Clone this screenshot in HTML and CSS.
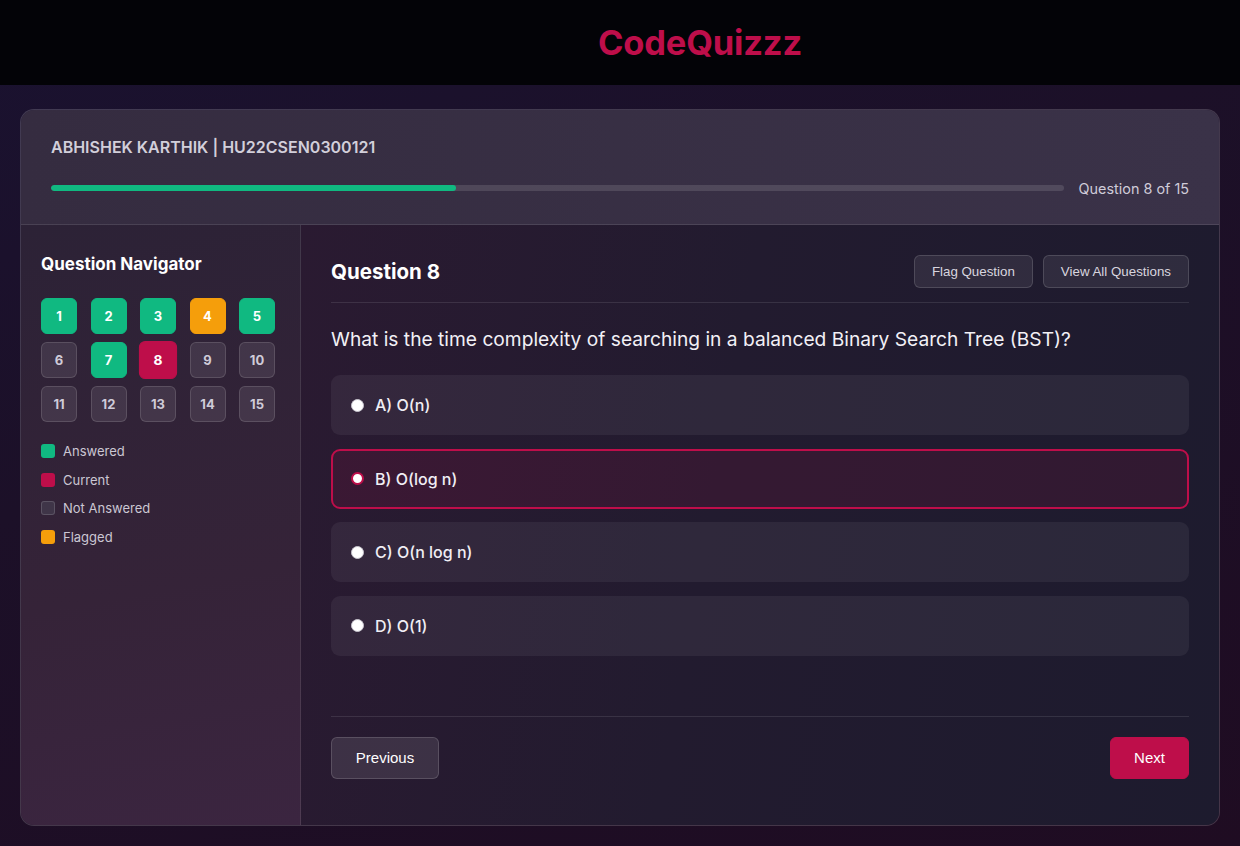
FILE: index.html
```html
<!DOCTYPE html>
<html lang="en">
<head>
<meta charset="utf-8">
<title>CodeQuizzz</title>
<link rel="stylesheet" href="styles.css">
</head>
<body>
<header class="site-header">
  <h1 class="logo">CodeQuizzz</h1>
</header>
<main class="page">
  <section class="card">
    <div class="card-top">
      <div class="student">ABHISHEK KARTHIK | HU22CSEN0300121</div>
      <div class="progress-row">
        <div class="progress"><div class="progress-fill" style="width:40%"></div></div>
        <div class="progress-label">Question 8 of 15</div>
      </div>
    </div>
    <div class="card-body">
      <aside class="sidebar">
        <h2 class="side-title">Question Navigator</h2>
        <div class="nav-grid">
          <button class="qbtn answered">1</button>
          <button class="qbtn answered">2</button>
          <button class="qbtn answered">3</button>
          <button class="qbtn flagged">4</button>
          <button class="qbtn answered">5</button>
          <button class="qbtn">6</button>
          <button class="qbtn answered">7</button>
          <button class="qbtn current">8</button>
          <button class="qbtn">9</button>
          <button class="qbtn">10</button>
          <button class="qbtn">11</button>
          <button class="qbtn">12</button>
          <button class="qbtn">13</button>
          <button class="qbtn">14</button>
          <button class="qbtn">15</button>
        </div>
        <ul class="legend">
          <li><span class="sw sw-answered"></span>Answered</li>
          <li><span class="sw sw-current"></span>Current</li>
          <li><span class="sw sw-none"></span>Not Answered</li>
          <li><span class="sw sw-flagged"></span>Flagged</li>
        </ul>
      </aside>
      <div class="main">
        <div class="q-head">
          <h2 class="q-title">Question 8</h2>
          <div class="q-actions">
            <button class="ghost-btn">Flag Question</button>
            <button class="ghost-btn">View All Questions</button>
          </div>
        </div>
        <p class="q-text">What is the time complexity of searching in a balanced Binary Search Tree (BST)?</p>
        <div class="options">
          <label class="option"><span class="radio"></span>A) O(n)</label>
          <label class="option selected"><span class="radio"></span>B) O(log n)</label>
          <label class="option"><span class="radio"></span>C) O(n log n)</label>
          <label class="option"><span class="radio"></span>D) O(1)</label>
        </div>
        <div class="q-foot">
          <button class="nav-btn prev">Previous</button>
          <button class="nav-btn next">Next</button>
        </div>
      </div>
    </div>
  </section>
</main>
</body>
</html>
```

FILE: styles.css
```css
* { box-sizing: border-box; }
html, body { margin: 0; padding: 0; }
body {
  font-family: Inter, "Liberation Sans", sans-serif;
  color: #fff;
  background: linear-gradient(160deg, #1a1230 0%, #1c1028 40%, #1f0c22 100%);
  min-height: 846px;
}
.site-header {
  height: 85px;
  background: #030307;
  display: flex;
  align-items: center;
  justify-content: center;
}
.logo {
  margin: 0 0 0 160px;
  font-size: 34.5px;
  font-weight: 700;
  color: #be0e4a;
  letter-spacing: -0.2px;
}
.page {
  padding: 24px 20px 20px;
}
.card {
  border: 1px solid rgba(255,255,255,0.12);
  border-radius: 14px;
  overflow: hidden;
  background: rgba(255,255,255,0.06);
}
.card-top {
  padding: 27px 30px 26px;
  background: linear-gradient(90deg, #352c40 0%, #3a3248 100%);
  border-bottom: 1px solid rgba(255,255,255,0.1);
}
.student {
  font-size: 16px;
  font-weight: 600;
  line-height: 20px;
  color: #d2cfda;
}
.progress-row {
  margin-top: 21px;
  display: flex;
  align-items: center;
  gap: 15px;
  height: 20px;
}
.progress {
  flex: 1;
  height: 6px;
  border-radius: 3px;
  background: rgba(255,255,255,0.12);
  overflow: hidden;
}
.progress-fill {
  height: 100%;
  background: #10b981;
  border-radius: 3px;
}
.progress-label {
  font-size: 14.4px;
  color: #cfcbd8;
}
.card-body {
  display: flex;
  height: 600px;
}
.sidebar {
  width: 280px;
  flex: none;
  padding: 28px 20px 20px;
  border-right: 1px solid rgba(255,255,255,0.1);
  background: linear-gradient(170deg, #2c2236 0%, #352338 60%, #3b2540 100%);
}
.side-title {
  margin: 0;
  font-size: 17px;
  line-height: 22px;
  font-weight: 700;
  color: #fff;
}
.nav-grid {
  margin-top: 23px;
  display: grid;
  grid-template-columns: repeat(5, 36px);
  column-gap: 13.5px;
  row-gap: 8px;
}
.qbtn {
  width: 36px;
  height: 36px;
  border-radius: 6px;
  border: 1px solid rgba(255,255,255,0.13);
  background: rgba(255,255,255,0.09);
  color: #cfcbd8;
  font-family: Inter, "Liberation Sans", sans-serif;
  font-size: 13px;
  font-weight: 700;
  padding: 0;
}
.qbtn.answered { background: #10b981; border-color: #10b981; color: #fff; }
.qbtn.flagged { background: #f59e0b; border-color: #f59e0b; color: #fff; }
.qbtn.current { background: #be0e4a; border-color: #be0e4a; color: #fff; transform: scale(1.06); }
.legend {
  list-style: none;
  margin: 19px 0 0;
  padding: 0;
  display: flex;
  flex-direction: column;
  gap: 8.5px;
}
.legend li {
  display: flex;
  align-items: center;
  gap: 8px;
  font-size: 13px;
  line-height: 20px;
  color: #cbc7d3;
}
.sw {
  width: 14px;
  height: 14px;
  border-radius: 3px;
  flex: none;
}
.sw-answered { background: #10b981; }
.sw-current { background: #be0e4a; }
.sw-none { background: #3f3548; border: 1px solid rgba(255,255,255,0.15); }
.sw-flagged { background: #f59e0b; }
.main {
  flex: 1;
  padding: 30px 30px 0;
  background: linear-gradient(100deg, #2a1a31 0%, #221b2f 45%, #1d1b2e 100%);
}
.q-head {
  display: flex;
  align-items: center;
  justify-content: space-between;
  padding-bottom: 14px;
  border-bottom: 1px solid rgba(255,255,255,0.1);
}
.q-title {
  margin: 0;
  font-size: 20.5px;
  font-weight: 700;
  color: #fff;
}
.q-actions { display: flex; gap: 10px; }
.ghost-btn {
  height: 33px;
  padding: 0 17px;
  border-radius: 6px;
  border: 1px solid rgba(255,255,255,0.14);
  background: rgba(255,255,255,0.08);
  color: #d8d5df;
  font-family: "Liberation Sans", Arial, sans-serif;
  font-size: 13.33px;
}
.q-text {
  margin: 24px 0 0;
  font-size: 19.2px;
  line-height: 24px;
  color: #f2f0f6;
}
.options {
  margin-top: 24px;
  display: flex;
  flex-direction: column;
  gap: 13.5px;
}
.option {
  height: 60px;
  display: flex;
  align-items: center;
  gap: 11px;
  padding: 0 18px 0 18px;
  border-radius: 9px;
  background: rgba(255,255,255,0.06);
  border: 2px solid transparent;
  font-size: 16px;
  font-weight: 500;
  color: #f0eef4;
}
.option.selected {
  background: rgba(190,14,74,0.12);
  border-color: #be0e4a;
}
.radio {
  width: 13px;
  height: 13px;
  border-radius: 50%;
  background: #fff;
  border: 1px solid #c9c6cf;
  flex: none;
}
.option.selected .radio {
  background: #fff;
  border: 2.5px solid #be0e4a;
}
.q-foot {
  margin-top: 60px;
  padding-top: 20px;
  border-top: 1px solid rgba(255,255,255,0.1);
  display: flex;
  justify-content: space-between;
}
.nav-btn {
  height: 42px;
  border-radius: 6px;
  font-family: "Liberation Sans", Arial, sans-serif;
  font-size: 15px;
  color: #fff;
}
.nav-btn.prev {
  width: 108px;
  background: rgba(255,255,255,0.1);
  border: 1px solid rgba(255,255,255,0.15);
}
.nav-btn.next {
  width: 79px;
  background: #be0e4a;
  border: 1px solid #be0e4a;
}
```
